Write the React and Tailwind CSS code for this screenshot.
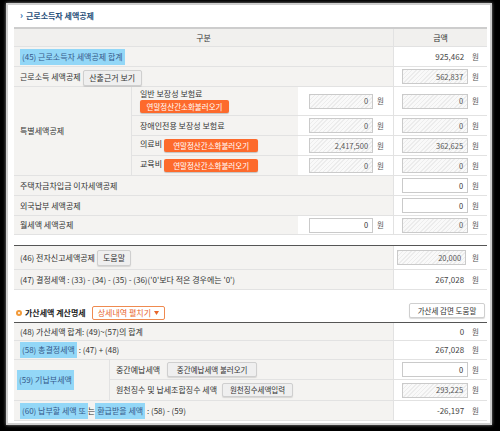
const hatch =
  "bg-[repeating-linear-gradient(135deg,#ececec_0px,#ececec_1px,#f9f9f9_1px,#f9f9f9_3px)]";

const Hl = ({ children }) => (
  <span className="bg-[#93d7f7] text-[#35598a] px-[2px] py-[3px]">{children}</span>
);

const Field = ({ value, kind = "hatch", narrow = false }) => {
  const w = narrow ? "w-[64px]" : "w-[66px]";
  if (kind === "text") {
    return <span className={`${w} text-right pr-[4px] text-[#444]`}>{value}</span>;
  }
  return (
    <span
      className={`${w} h-[15px] border border-[#cacaca] flex items-center justify-end pr-[4px] text-[7.5px] ${
        kind === "hatch" ? `${hatch} text-[#555]` : "bg-white text-[#333]"
      }`}
    >
      {value}
    </span>
  );
};

const Won = () => <span className="text-[#555] text-[7.5px]">원</span>;

const ValueCell = ({ value, kind }) => (
  <div className="w-[94px] shrink-0 flex items-center justify-end gap-[4px] pr-[8px] border-l border-[#e2e2e2] bg-white">
    <Field value={value} kind={kind} />
    <Won />
  </div>
);

const MidCell = ({ value, kind }) => (
  <div className="w-[95px] shrink-0 flex items-center justify-end gap-[4px] pr-[9px] bg-white">
    <Field value={value} kind={kind} narrow />
    <Won />
  </div>
);

const GreyBtn = ({ children, className = "" }) => (
  <span
    className={`inline-flex items-center justify-center bg-[#efefef] border border-[#cfcfcf] rounded-[2px] shadow-[0_1px_1px_rgba(0,0,0,0.12)] text-[#333] ${className}`}
  >
    {children}
  </span>
);

const OrangeBtn = ({ className = "" }) => (
  <span
    className={`inline-flex items-center justify-center h-[13px] bg-[#fd6a2c] rounded-[2px] shadow-[0_1px_1px_rgba(0,0,0,0.2)] text-white text-[7.5px] ${className}`}
  >
    연말정산간소화불러오기
  </span>
);

const Row = ({ h = "h-[20px]", children }) => (
  <div className={`flex ${h} border-b border-[#e2e2e2]`}>{children}</div>
);

const Label = ({ w = "w-[379px]", children, className = "" }) => (
  <div className={`${w} shrink-0 flex items-center pl-[6px] bg-[#f4f3f1] ${className}`}>{children}</div>
);

export default function App() {
  return (
    <div className="w-[500px] h-[431px] bg-black overflow-hidden pt-[5px] pl-[8px] font-['Noto_Sans_CJK_KR','Noto_Sans',sans-serif] text-[8px] leading-[10px] text-[#333]">
      <div className="w-[482px] h-[418px] bg-white shadow-[0_0_0_2px_#cfcfcf,0_0_3px_2px_#888]">
        <div className="h-[22px] flex items-center pl-[12px] gap-[3px] font-bold text-[#1f4d78]">
          <span className="text-[#1e6bb0] text-[9px] leading-[10px]">›</span>
          <span>근로소득자 세액공제</span>
        </div>

        <div className="ml-[6px] w-[473px]">
          {/* header */}
          <div className="flex h-[20px] border-t-2 border-b border-t-[#cdcdcd] border-b-[#e2e2e2] bg-[#f1f0ee]">
            <div className="w-[379px] flex items-center justify-center">구분</div>
            <div className="w-[94px] flex items-center justify-center border-l border-[#e2e2e2]">금액</div>
          </div>

          <Row>
            <Label className="pl-[5px]">
              <Hl>(45) 근로소득자 세액공제 합계</Hl>
            </Label>
            <ValueCell value="925,462" kind="text" />
          </Row>

          <Row>
            <Label>
              <span>근로소득 세액공제</span>
              <GreyBtn className="ml-[2px] w-[59px] h-[16px] mt-[3px]">산출근거 보기</GreyBtn>
            </Label>
            <ValueCell value="562,837" />
          </Row>

          {/* 특별세액공제 */}
          <div className="flex border-b border-[#e2e2e2]">
            <div className="w-[118px] shrink-0 flex items-center pl-[6px] bg-[#f4f3f1] border-r border-[#e2e2e2]">
              특별세액공제
            </div>
            <div className="flex flex-col">
              <div className="flex h-[29px] border-b border-[#e2e2e2]">
                <div className="w-[166px] shrink-0 flex flex-col justify-center pl-[8px] bg-[#f4f3f1]">
                  <span>일반 보장성 보험료</span>
                  <OrangeBtn className="w-[89px] mt-[1px]" />
                </div>
                <MidCell value="0" />
                <ValueCell value="0" />
              </div>
              <div className="flex h-[20px] border-b border-[#e2e2e2]">
                <div className="w-[166px] shrink-0 flex items-center pl-[8px] bg-[#f4f3f1]">
                  장애인전용 보장성 보험료
                </div>
                <MidCell value="0" />
                <ValueCell value="0" />
              </div>
              <div className="flex h-[20px] border-b border-[#e2e2e2]">
                <div className="w-[166px] shrink-0 flex items-start pt-[2px] pl-[8px] gap-[2px] bg-[#f4f3f1]">
                  <span className="pt-[1px]">의료비</span>
                  <OrangeBtn className="w-[94px] mt-[1px]" />
                </div>
                <MidCell value="2,417,500" />
                <ValueCell value="362,625" />
              </div>
              <div className="flex h-[19px]">
                <div className="w-[166px] shrink-0 flex items-start pt-[2px] pl-[8px] gap-[2px] bg-[#f4f3f1]">
                  <span className="pt-[1px]">교육비</span>
                  <OrangeBtn className="w-[94px] mt-[1px]" />
                </div>
                <MidCell value="0" />
                <ValueCell value="0" />
              </div>
            </div>
          </div>

          <Row>
            <Label>주택자금차입금 이자세액공제</Label>
            <ValueCell value="0" kind="input" />
          </Row>
          <Row>
            <Label>외국납부 세액공제</Label>
            <ValueCell value="0" kind="input" />
          </Row>
          <Row h="h-[19px]">
            <Label w="w-[284px]">월세액 세액공제</Label>
            <MidCell value="0" kind="input" />
            <ValueCell value="0" />
          </Row>

          <div className="h-[10px]" />

          <div className="border-t-[1.5px] border-[#555]">
            <Row h="h-[24px]">
              <Label>
                <span>(46) 전자신고세액공제</span>
                <GreyBtn className="ml-[2px] w-[34px] h-[16px]">도움말</GreyBtn>
              </Label>
              <div className="w-[94px] shrink-0 flex items-center justify-end gap-[6px] pr-[8px] border-l border-[#e2e2e2] bg-white">
                <span className={`w-[69px] h-[15px] border border-[#cacaca] flex items-center justify-end pr-[4px] text-[7.5px] ${hatch} text-[#555]`}>
                  20,000
                </span>
                <Won />
              </div>
            </Row>
            <Row>
              <Label>(47) 결정세액 : (33) - (34) - (35) - (36)('0'보다 적은 경우에는 '0')</Label>
              <ValueCell value="267,028" kind="text" />
            </Row>
          </div>

          {/* 가산세액 계산명세 */}
          <div className="h-[32px] flex items-end justify-between pb-[2px]">
            <div className="flex items-center h-[15px] pl-[2px]">
              <span className="w-[6px] h-[6px] rounded-full bg-[#f29a3a] flex items-center justify-center">
                <span className="w-[2px] h-[2px] rounded-full bg-white" />
              </span>
              <span className="ml-[3px] font-bold text-[#222]">가산세액 계산명세</span>
              <span className="ml-[6px] h-[14px] px-[5px] flex items-center gap-[3px] bg-white border border-[#ef8a4f] rounded-[2px] text-[#e8652b]">
                상세내역 펼치기
                <svg width="5" height="4" viewBox="0 0 5 4">
                  <path d="M0 0h5L2.5 4z" fill="#e8652b" />
                </svg>
              </span>
            </div>
            <span className="mb-[2px] mr-[2px] h-[15px] w-[76px] flex items-center justify-center bg-white border border-[#cfcfcf] rounded-[2px] shadow-[0_1px_1px_rgba(0,0,0,0.15)] text-[#333] text-[7.5px]">
              가산세 감면 도움말
            </span>
          </div>

          <div className="border-t-[1.5px] border-[#555]">
            <Row h="h-[18px]">
              <Label>(48) 가산세액 합계: (49)~(57)의 합계</Label>
              <ValueCell value="0" kind="text" />
            </Row>
            <Row h="h-[19px]">
              <Label className="pl-[5px]">
                <Hl>(58) 총결정세액</Hl>
                <span>&nbsp;: (47) + (48)</span>
              </Label>
              <ValueCell value="267,028" kind="text" />
            </Row>
            <div className="flex border-b border-[#e2e2e2]">
              <div className="w-[96px] shrink-0 flex items-center pl-[3px] bg-[#f4f3f1] border-r border-[#e2e2e2]">
                <span className="bg-[#93d7f7] text-[#35598a] px-[2px] py-[5px]">(59) 기납부세액</span>
              </div>
              <div className="flex flex-col">
                <div className="flex h-[20px] border-b border-[#e2e2e2]">
                  <div className="w-[283px] shrink-0 flex items-center pl-[6px] bg-[#f4f3f1]">
                    <span>중간예납세액</span>
                    <GreyBtn className="ml-[7px] w-[90px] h-[15px] text-[7.5px]">중간예납세액 불러오기</GreyBtn>
                  </div>
                  <ValueCell value="0" kind="input" />
                </div>
                <div className="flex h-[20px]">
                  <div className="w-[283px] shrink-0 flex items-center pl-[6px] bg-[#f4f3f1]">
                    <span>원천징수 및 납세조합징수 세액</span>
                    <GreyBtn className="ml-[5px] w-[71px] h-[14px] text-[7.5px]">원천징수세액입력</GreyBtn>
                  </div>
                  <ValueCell value="293,225" />
                </div>
              </div>
            </div>
            <Row>
              <Label className="pl-[5px]">
                <Hl>(60) 납부할 세액 또</Hl>
                <span>는</span>
                <Hl>환급받을 세액</Hl>
                <span>&nbsp;: (58) - (59)</span>
              </Label>
              <ValueCell value="-26,197" kind="text" />
            </Row>
          </div>
        </div>
      </div>
    </div>
  );
}
